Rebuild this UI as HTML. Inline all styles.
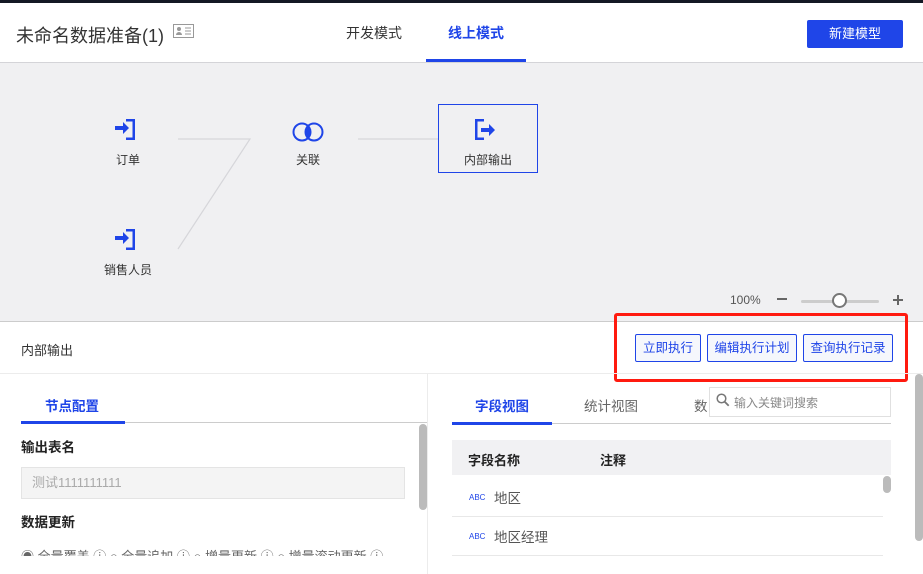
<!DOCTYPE html>
<html><head><meta charset="utf-8"><style>
*{margin:0;padding:0;box-sizing:border-box}
body{width:923px;height:574px;overflow:hidden;background:#fff;font-family:"Liberation Sans","Noto Sans CJK SC",sans-serif;position:relative;color:#333}
.a{position:absolute}
.t{font-size:12px;color:#333;white-space:nowrap}
.btn{position:absolute;top:334px;height:28px;border:1px solid #1f45e8;background:#f5f7fc;color:#1f45e8;font-size:12.5px;line-height:26px;text-align:center;border-radius:2px}
</style></head><body>
<div class="a" style="left:0;top:0;width:923px;height:3px;background:#141824"></div>
<div class="a t" style="left:16px;top:22px;font-size:18px;color:#333">未命名数据准备(1)</div>
<svg class="a" style="left:173px;top:24px" width="22" height="15"><rect x="0.5" y="0.5" width="20" height="13" fill="none" stroke="#999"/><circle cx="6" cy="5" r="2" fill="#999"/><path d="M3 11a3 3 0 0 1 6 0z" fill="#999"/><path d="M12 4h6M12 7h6M12 10h6" stroke="#999"/></svg>
<div class="a t" style="left:346px;top:23px;font-size:14px">开发模式</div>
<div class="a t" style="left:448px;top:23px;font-size:14px;color:#1f45e8;font-weight:bold">线上模式</div>
<div class="a" style="left:426px;top:59px;width:100px;height:3px;background:#1f45e8"></div>
<div class="a" style="left:807px;top:20px;width:96px;height:28px;background:#1f45e8;color:#fff;font-size:13px;line-height:28px;text-align:center;border-radius:2px">新建模型</div>
<div class="a" style="left:0;top:62px;width:923px;height:260px;background:#f0f0f2;border-top:1px solid #d4d4d8;border-bottom:1px solid #ccc"></div>
<svg class="a" style="left:0;top:62px" width="923" height="260">
<path d="M178 77H250L178 187M358 77H438" stroke="#d6d6da" stroke-width="1.2" fill="none"/>
<g fill="#1f45e8"><path d="M115 64h8v-4l6 6-6 6v-4h-8z"/><path d="M126 57h9v21h-9v-2.5h6.5V59.5h-6.5z"/>
<path d="M115 174h8v-4l6 6-6 6v-4h-8z"/><path d="M126 167h9v21h-9v-2.5h6.5v-16h-6.5z"/>
<path d="M475 57h9v2.5h-6.5v16h6.5v2.5h-9z"/><path d="M481 66h8v-4l6 6-6 6v-4h-8z"/></g>
<circle cx="302" cy="70" r="8.5" fill="none" stroke="#1f45e8" stroke-width="2"/><circle cx="314" cy="70" r="8.5" fill="none" stroke="#1f45e8" stroke-width="2"/><path d="M308 63.5a8.5 8.5 0 0 1 0 13a8.5 8.5 0 0 1 0-13z" fill="#1f45e8"/>
<rect x="438.5" y="42.5" width="99" height="68" fill="none" stroke="#1f45e8"/>
</svg>
<div class="a t" style="left:116px;top:151px">订单</div>
<div class="a t" style="left:296px;top:151px">关联</div>
<div class="a t" style="left:464px;top:151px">内部输出</div>
<div class="a t" style="left:104px;top:261px">销售人员</div>
<div class="a t" style="left:730px;top:293px;color:#555">100%</div>
<div class="a" style="left:777px;top:298px;width:10px;height:2px;background:#666"></div>
<div class="a" style="left:801px;top:300px;width:78px;height:3px;background:#ccc;border-radius:2px"></div>
<div class="a" style="left:832px;top:293px;width:15px;height:15px;border:2px solid #777;background:#fff;border-radius:50%"></div>
<div class="a" style="left:893px;top:299px;width:10px;height:2px;background:#666"></div><div class="a" style="left:897px;top:295px;width:2px;height:10px;background:#666"></div>
<div class="a t" style="left:21px;top:340px;font-size:13px">内部输出</div>
<div class="btn" style="left:635px;width:66px">立即执行</div>
<div class="btn" style="left:707px;width:90px">编辑执行计划</div>
<div class="btn" style="left:803px;width:90px">查询执行记录</div>
<div class="a" style="left:614px;top:313px;width:294px;height:69px;border:3px solid #ff1a0f;border-radius:3px"></div>
<div class="a" style="left:0;top:373px;width:923px;height:1px;background:#ececec"></div>
<div class="a" style="left:427px;top:374px;width:1px;height:200px;background:#ececec"></div>
<div class="a t" style="left:45px;top:395px;font-size:13.5px;color:#1f45e8;font-weight:bold">节点配置</div>
<div class="a" style="left:21px;top:422px;width:406px;height:1px;background:#ccc"></div>
<div class="a" style="left:21px;top:421px;width:104px;height:3px;background:#1f45e8"></div>
<div class="a" style="left:419px;top:424px;width:8px;height:86px;background:#bbb;border-radius:4px"></div>
<div class="a t" style="left:21px;top:436px;font-size:13.5px;font-weight:bold;color:#222">输出表名</div>
<div class="a" style="left:21px;top:467px;width:384px;height:32px;background:#f4f4f4;border:1px solid #e4e4e4;color:#aaa;font-size:13px;line-height:30px;padding-left:10px">测试1111111111</div>
<div class="a t" style="left:21px;top:511px;font-size:13.5px;font-weight:bold;color:#222">数据更新</div>
<div class="a" style="left:0;top:545px;width:427px;height:11px;overflow:hidden"><div class="t" style="position:absolute;top:1px;left:21px;font-size:13px;color:#666">◉ 全量覆盖 ⓘ ○ 全量追加 ⓘ ○ 增量更新 ⓘ ○ 增量滚动更新 ⓘ</div></div>
<div class="a t" style="left:475px;top:395px;font-size:13.5px;color:#1f45e8;font-weight:bold">字段视图</div>
<div class="a t" style="left:584px;top:395px;font-size:13.5px;color:#666">统计视图</div>
<div class="a t" style="left:694px;top:395px;font-size:13.5px;color:#666">数</div>
<div class="a" style="left:452px;top:423px;width:439px;height:1px;background:#ccc"></div>
<div class="a" style="left:452px;top:422px;width:100px;height:3px;background:#1f45e8"></div>
<div class="a" style="left:709px;top:387px;width:182px;height:30px;background:#fff;border:1px solid #e0e0e0"></div>
<svg class="a" style="left:716px;top:393px" width="14" height="14"><circle cx="5.5" cy="5.5" r="4.3" fill="none" stroke="#777" stroke-width="1.5"/><path d="M8.7 8.7l4 4" stroke="#777" stroke-width="1.8"/></svg>
<div class="a t" style="left:734px;top:394px;color:#888">输入关键词搜索</div>
<div class="a" style="left:452px;top:440px;width:439px;height:35px;background:#f1f1f3"></div>
<div class="a t" style="left:468px;top:450px;font-size:13px;font-weight:bold;color:#222">字段名称</div>
<div class="a t" style="left:600px;top:450px;font-size:13px;font-weight:bold;color:#222">注释</div>
<div class="a" style="left:883px;top:476px;width:8px;height:17px;background:#bbb;border-radius:4px"></div>
<div class="a t" style="left:469px;top:493px;font-size:8px;color:#1f45e8">ABC</div>
<div class="a t" style="left:494px;top:487px;font-size:13.5px;color:#555">地区</div>
<div class="a" style="left:452px;top:516px;width:431px;height:1px;background:#e8e8e8"></div>
<div class="a t" style="left:469px;top:532px;font-size:8px;color:#1f45e8">ABC</div>
<div class="a t" style="left:494px;top:526px;font-size:13.5px;color:#555">地区经理</div>
<div class="a" style="left:452px;top:555px;width:431px;height:1px;background:#e8e8e8"></div>
<div class="a" style="left:915px;top:374px;width:8px;height:167px;background:#bbb;border-radius:4px"></div>
</body></html>
